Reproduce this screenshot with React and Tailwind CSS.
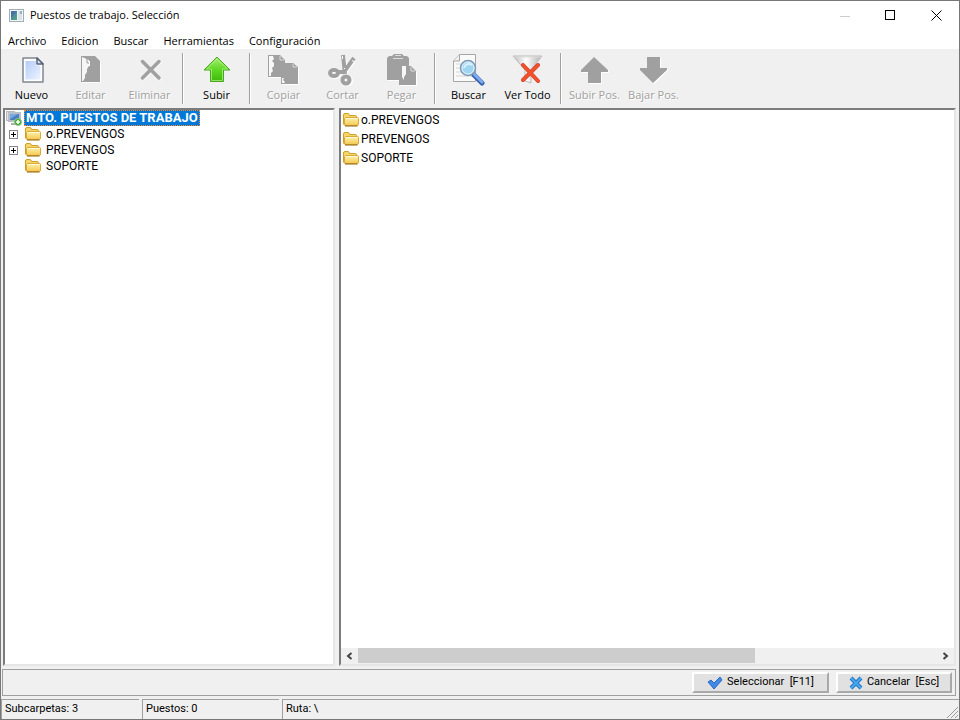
import React from 'react';

const NewIcon = () => (
  <svg width="32" height="32" viewBox="0 0 32 32">
    <defs>
      <linearGradient id="page" x1="0" y1="0" x2="1" y2="1">
        <stop offset="0" stopColor="#b4ccfa" />
        <stop offset="1" stopColor="#eef4ff" />
      </linearGradient>
    </defs>
    <path d="M7 4H21L27 10V28H7Z" fill="#fff" stroke="#7f8794" strokeWidth="1.500" strokeLinejoin="round" />
    <path d="M9.500 7H20V11.500H24.500V25.500H9.500Z" fill="url(#page)" />
    <path d="M21 4V10H27Z" fill="#dbe7fd" stroke="#566377" strokeWidth="1.500" strokeLinejoin="round" />
  </svg>
);

const EditIcon = () => (
  <svg width="32" height="32" viewBox="0 0 32 32">
    <path d="M7 3H20L26 8V29H7Z" fill="#fff" />
    <path d="M6 2H20L25 7V28H6Z" fill="#a0a0a0" />
    <path d="M7 3L14 6V12L12 15V18L10 21V24L8 27H7Z" fill="#f6f6f6" />
    <path d="M12 5V9H15V7" stroke="#a0a0a0" fill="none" />
    <path d="M14.500 7V12" stroke="#fff" strokeWidth="1" />
  </svg>
);

const DeleteIcon = () => (
  <svg width="32" height="32" viewBox="0 0 32 32" fill="none" strokeLinecap="round">
    <path d="M9 8L26 25M26 8L9 25" stroke="#fff" strokeWidth="3" />
    <path d="M8.500 7.500L25 24M25 7.500L8.500 24" stroke="#a0a0a0" strokeWidth="3.500" />
  </svg>
);

const GreenUpIcon = () => (
  <svg width="32" height="32" viewBox="0 0 32 32">
    <defs>
      <linearGradient id="green" x1="0" y1="0" x2="0" y2="1">
        <stop offset="0" stopColor="#a8ef72" />
        <stop offset=".55" stopColor="#5bd622" />
        <stop offset="1" stopColor="#40b60c" />
      </linearGradient>
    </defs>
    <path d="M16 3L29 16H22.500V27.500H9.500V16H3Z" fill="url(#green)" stroke="#48a71e" strokeLinejoin="round" />
    <path d="M16 5L26.500 15H21.500V26.500H10.500V15H5.500Z" fill="none" stroke="#b4f58b" opacity=".7" />
  </svg>
);

const CopyIcon = () => (
  <svg width="32" height="32" viewBox="0 0 32 32">
    <path d="M1 2H13L17 6V10H26L31 14V31H14V24H1Z" fill="#fff" />
    <path d="M0 1H12L17 6V9H25L30 13V30H13V23H0Z" fill="#a0a0a0" />
    <path d="M1 2H5L6 5L4 7L6 9V12L4 14L5 17L3 19V22H1Z" fill="#f8f8f8" />
    <path d="M14 24H16L15 26L17 28L16 29H14Z" fill="#f8f8f8" />
    <path d="M12 2V6H16M25 10V13H29" stroke="#d8d8d8" fill="none" />
  </svg>
);

const CutIcon = () => (
  <svg width="32" height="32" viewBox="0 0 32 32" fill="none">
    <g stroke="#fff" strokeWidth="4" transform="translate(1 1)">
      <ellipse cx="7" cy="19" rx="4" ry="3" />
      <ellipse cx="19" cy="26" rx="4" ry="4" />
      <path d="M16 2L18 19M26 5L16 19" />
    </g>
    <g stroke="#a0a0a0" strokeWidth="4">
      <path d="M16 1L18 20M27 4L17 18L11 18" />
      <ellipse cx="7" cy="19" rx="4" ry="3" />
      <ellipse cx="19" cy="26" rx="3.500" ry="3.500" />
    </g>
    <path d="M15.500 2V5M26 6V8M17.500 14V15" stroke="#fff" />
  </svg>
);

const PasteIcon = () => (
  <svg width="32" height="32" viewBox="0 0 32 32">
    <path d="M2 4H7V1H18V4H23V13H26L31 18V32H14V27H2Z" fill="#fff" />
    <path d="M1 4L3 2H6L8 0H16L18 2H21L23 4V12H25L30 17V31H13V26H1Z" fill="#a0a0a0" />
    <path d="M16 12H20V20L18 23V26L16 23Z" fill="#f8f8f8" />
    <path d="M7 4.500H17M9 1.500H15M25 13V17H29" stroke="#ddd" fill="none" />
  </svg>
);

const SearchIcon = () => (
  <svg width="34" height="32" viewBox="0 0 34 32">
    <path d="M7.500 .5H23.500V27.500H1.500V7Z" fill="#fafafa" stroke="#a6a6a6" />
    <path d="M7.500 .5V7H1.500" fill="#eee" stroke="#a6a6a6" />
    <path d="M4 10H20M4 14H20M4 18H20M4 22H20" stroke="#d5d5d5" />
    <path d="M22 21L30 29" stroke="#3a62b0" strokeWidth="5" strokeLinecap="round" />
    <path d="M22 20L30 28" stroke="#7facec" strokeWidth="3" strokeLinecap="round" />
    <circle cx="16" cy="14" r="7.500" fill="#a8dbf4" stroke="#7f98b4" strokeWidth="1.500" />
    <circle cx="16" cy="14" r="6" fill="#9ed6f2" stroke="#e6f3fb" />
    <path d="M12 14C13 10 17 9 20 11" stroke="#d8f1fc" strokeWidth="2" fill="none" />
  </svg>
);

const FilterIcon = () => (
  <svg width="32" height="32" viewBox="1 0 32 32">
    <defs>
      <linearGradient id="funnel">
        <stop offset="0" stopColor="#b8b8b8" />
        <stop offset=".45" stopColor="#fff" />
        <stop offset="1" stopColor="#b0b0b0" />
      </linearGradient>
    </defs>
    <path d="M2 2H31L20 16V29L14 27V16Z" fill="url(#funnel)" stroke="#bbb" />
    <path d="M3 3H30" stroke="#ddd" />
    <path d="M12 11L27 27M27 11L12 26" stroke="#c93f22" strokeWidth="4" strokeLinecap="round" />
    <path d="M12 11L27 27M27 11L12 26" stroke="#f4512d" strokeWidth="3" strokeLinecap="round" />
  </svg>
);

const GrayUpIcon = () => (
  <svg width="32" height="32" viewBox="1 0 32 32">
    <path d="M17 4L31 17V19H24V30H11V19H4V17Z" fill="#fff" />
    <path d="M16 3L30 16V18H23V29H10V18H3V16Z" fill="#a0a0a0" />
  </svg>
);

const GrayDownIcon = () => (
  <svg width="32" height="32" viewBox="1 0 32 32">
    <path d="M11 4H24V15H31V17L17 30L4 17V15H11Z" fill="#fff" />
    <path d="M10 3H23V14H30V16L16 29L3 16V14H10Z" fill="#a0a0a0" />
  </svg>
);

const Folder = () => (
  <svg width="16" height="16" viewBox="0 0 16 16" className="shrink-0">
    <defs>
      <linearGradient id="folder" x1="0" y1="0" x2="0" y2="1">
        <stop offset="0" stopColor="#fff3b0" />
        <stop offset="1" stopColor="#f3c850" />
      </linearGradient>
    </defs>
    <path d="M.5 12V3Q.5 1.500 2 1.500H5Q6 1.500 6.500 3.500H12.500Q13.500 3.500 13.500 5V13.500H2Z" fill="#f7d566" stroke="#cf9f2e" />
    <path d="M2.500 5.500H14.500Q15.500 5.500 15.500 6.500V12Q15.500 13.500 14 13.500H3Q1.500 13.500 1.500 12L1.500 6.500Z" fill="url(#folder)" stroke="#d9aa38" />
    <path d="M2 14H14.500" stroke="#94640f" />
    <path d="M3 6.500H14" stroke="#fffbd8" />
  </svg>
);

const Computer = () => (
  <svg width="18" height="16" viewBox="0 0 18 16" className="shrink-0">
    <rect x="1.500" y="1.500" width="8" height="9" fill="#dfe2e6" stroke="#b4bac0" />
    <rect x="4" y="3" width="11" height="8" fill="#4a7fc4" stroke="#b9bfc6" strokeWidth="2" />
    <path d="M5 4H13L5 9Z" fill="#7ba7dd" />
    <path d="M6 14H12" stroke="#a8afb6" strokeWidth="2" />
    <circle cx="13" cy="12" r="3.500" fill="#3da52e" stroke="#8fca86" />
    <path d="M13 10V14M11 12H15" stroke="#fff" strokeWidth="1.500" />
  </svg>
);

const Tool = ({ icon: Icon, label, disabled }) => (
  <button
    disabled={disabled}
    className="flex w-[59px] flex-col items-center whitespace-nowrap pt-[5px] disabled:text-[#a0a0a0] disabled:[text-shadow:1px_1px_0_#fff]"
  >
    <Icon />
    <span className="mt-[2px] text-[11px] leading-[14px]">{label}</span>
  </button>
);

const Divider = () => (
  <div className="my-[4px] flex w-[8px] justify-center">
    <div className="w-[2px] border-l border-r border-l-[#a0a0a0] border-r-white" />
  </div>
);

const Expander = () => (
  <button aria-label="Expandir" className="block size-[9px]">
    <svg width="9" height="9" viewBox="0 0 9 9">
      <rect x=".5" y=".5" width="8" height="8" fill="#fff" stroke="#888" />
      <path d="M2 4.500H7M4.500 2V7" stroke="#000" />
    </svg>
  </button>
);

const menus = ['Archivo', 'Edicion', 'Buscar', 'Herramientas', 'Configuración'];
const folders = [
  { name: 'o.PREVENGOS', children: true },
  { name: 'PREVENGOS', children: true },
  { name: 'SOPORTE', children: false },
];
const sunken = 'border-2 border-t-[#7c7c7c] border-l-[#7c7c7c] border-r-[#e6e6e6] border-b-[#e6e6e6] bg-white';
const raised =
  'flex h-[21px] items-center justify-center border-2 border-t-white border-l-white border-r-[#a9a9a9] border-b-[#a9a9a9] bg-[#e1e1e1] whitespace-pre text-[11px]';
const statusCell = 'border-l border-t border-[#a0a0a0] px-[3px] text-[11px] leading-[18px]';

export default function App() {
  return (
    <div className="flex h-screen flex-col border border-[#777] bg-[#f0f0f0] font-['Roboto',sans-serif] text-[12px] text-black">
      <header className="flex h-[29px] shrink-0 items-center bg-white pl-[8px] font-['Open_Sans',sans-serif]">
        <svg width="15" height="13" viewBox="0 0 15 13">
          <rect x=".5" y=".5" width="14" height="12" fill="#f3f6f8" stroke="#a3adb6" />
          <rect x="2" y="2" width="6" height="9" fill="#4b91a0" />
          <path d="M2 2H8L2 9Z" fill="#48739e" />
          <path d="M4 11L8 5V11Z" fill="#51a078" />
          <rect x="9" y="2" width="4" height="9" fill="#d9e2e8" />
          <path d="M12 2V5" stroke="#458b83" />
        </svg>
        <h1 className="ml-[6px] flex-1 text-[11px]">Puestos de trabajo. Selección</h1>
        <button aria-label="Minimizar" disabled className="grid h-full w-[46px] place-items-center">
          <svg width="10" height="10"><path d="M0 5.500H10" stroke="#ccc" /></svg>
        </button>
        <button aria-label="Maximizar" className="grid h-full w-[45px] place-items-center">
          <svg width="11" height="11"><rect x=".5" y=".5" width="9" height="9" fill="none" stroke="#000" /></svg>
        </button>
        <button aria-label="Cerrar" className="grid h-full w-[46px] place-items-center">
          <svg width="11" height="11"><path d="M.5 .5L10.500 10.500M10.500 .5L.5 10.500" stroke="#000" /></svg>
        </button>
      </header>

      <nav className="flex h-[19px] shrink-0 items-end gap-[15px] bg-white pl-[7px] font-['Open_Sans',sans-serif] text-[11px] leading-[16px]">
        {menus.map((m) => (
          <button key={m}>{m}</button>
        ))}
      </nav>

      <div className="flex h-[59px] shrink-0 pl-px font-['Open_Sans',sans-serif]">
        <Tool icon={NewIcon} label="Nuevo" />
        <Tool icon={EditIcon} label="Editar" disabled />
        <Tool icon={DeleteIcon} label="Eliminar" disabled />
        <Divider />
        <Tool icon={GreenUpIcon} label="Subir" />
        <Divider />
        <Tool icon={CopyIcon} label="Copiar" disabled />
        <Tool icon={CutIcon} label="Cortar" disabled />
        <Tool icon={PasteIcon} label="Pegar" disabled />
        <Divider />
        <Tool icon={SearchIcon} label="Buscar" />
        <Tool icon={FilterIcon} label="Ver Todo" />
        <Divider />
        <Tool icon={GrayUpIcon} label="Subir Pos." disabled />
        <Tool icon={GrayDownIcon} label="Bajar Pos." disabled />
      </div>

      <main className="flex min-h-0 flex-1 gap-[4px] pl-[2px] pr-[3px]">
        <section className={`w-[332px] shrink-0 ${sunken}`}>
          <div className="flex h-[16px] items-center">
            <Computer />
            <button className="ml-px h-full border border-dotted border-[#ff8728] bg-[#0078d7] px-px text-[13px] leading-[14px] font-bold text-white">
              MTO. PUESTOS DE TRABAJO
            </button>
          </div>
          <ul>
            {folders.map((f) => (
              <li key={f.name} className="flex h-[16px] items-center pl-[4px]">
                <span className="w-[16px]">{f.children && <Expander />}</span>
                <Folder />
                <span className="ml-[5px]">{f.name}</span>
              </li>
            ))}
          </ul>
        </section>

        <section className={`flex min-w-0 flex-1 flex-col ${sunken}`}>
          <ul className="flex-1">
            {folders.map((f) => (
              <li key={f.name} className="flex h-[19px] items-center pl-[2px]">
                <Folder />
                <span className="ml-[2px]">{f.name}</span>
              </li>
            ))}
          </ul>
          <div className="flex h-[16px] items-center bg-[#f0f0f0]">
            <button aria-label="Izquierda" className="grid w-[17px] place-items-center">
              <svg width="7" height="8"><path d="M5.500 1L2 4L5.500 7" fill="none" stroke="#444" strokeWidth="2" /></svg>
            </button>
            <div className="h-full flex-1">
              <div className="h-[15px] w-[68.5%] bg-[#cdcdcd]" />
            </div>
            <button aria-label="Derecha" className="grid w-[17px] place-items-center">
              <svg width="7" height="8"><path d="M1.500 1L5 4L1.500 7" fill="none" stroke="#444" strokeWidth="2" /></svg>
            </button>
          </div>
        </section>
      </main>

      <div className="ml-px mr-[3px] mt-[3px] flex h-[27px] shrink-0 items-center justify-end gap-[7px] border border-[#a0a0a0] pr-[3px]">
        <button className={`${raised} w-[137px]`}>
          <svg width="16" height="14" viewBox="0 0 16 14" className="mr-[4px]">
            <path d="M1 6L4 4L7 7L13 1L15 4L7 13Z" fill="#3f8ae8" stroke="#2b67c6" />
          </svg>
          {'Seleccionar  [F11]'}
        </button>
        <button className={`${raised} w-[116px]`}>
          <svg width="14" height="14" viewBox="0 0 14 14" className="mr-[4px]">
            <path d="M2 2L12 12M12 2L2 12" stroke="#2177c5" strokeWidth="4" />
            <path d="M2 2L12 12M12 2L2 12" stroke="#48a7ee" strokeWidth="2" />
          </svg>
          {'Cancelar  [Esc]'}
        </button>
      </div>

      <footer className="mt-[3px] flex h-[20px] shrink-0 gap-[3px]">
        <div className={`${statusCell} w-[138px]`}>Subcarpetas: 3</div>
        <div className={`${statusCell} w-[137px]`}>Puestos: 0</div>
        <div className={`${statusCell} flex flex-1 justify-between pr-0`}>
          {'Ruta: \\'}
          <svg width="13" height="13" viewBox="0 0 13 13" className="self-end">
            <path d="M1 12L12 1M5 12L12 5M9 12L12 9" stroke="#999" />
          </svg>
        </div>
      </footer>
    </div>
  );
}
